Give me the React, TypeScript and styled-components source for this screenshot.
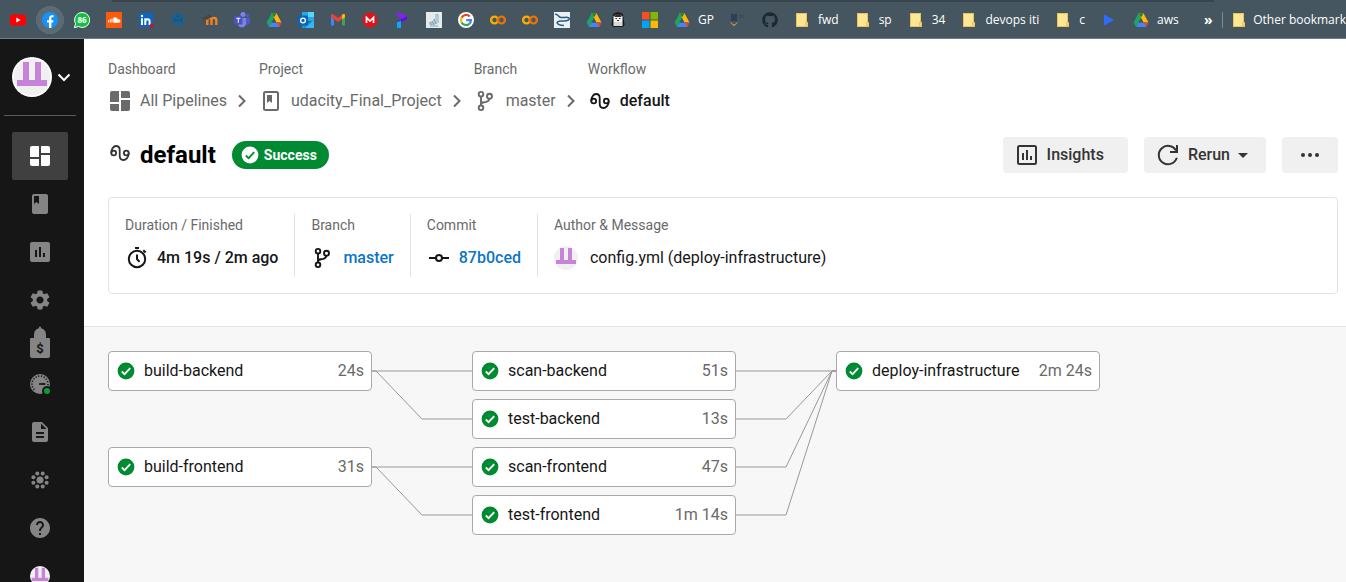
import React from "react";
import styled, { createGlobalStyle } from "styled-components";
import { MdSettings, MdHelp, MdDescription } from "react-icons/md";
import { FaGithub } from "react-icons/fa";

const GlobalStyle = createGlobalStyle`
  * { box-sizing: border-box; }
  html, body, #root { height: 100%; }
  body {
    margin: 0;
    font-family: Roboto, "Liberation Sans", sans-serif;
    font-size: 16px;
    line-height: 24px;
    color: #161616;
    background: #fff;
  }
  a { color: inherit; text-decoration: none; }
  button { font: inherit; color: inherit; border: 0; background: none; padding: 0; cursor: pointer; }
  svg { display: block; flex: none; }
`;

const green = "#008b33";

/* ---------- page frame ---------- */

const Page = styled.div`
  display: flex;
  flex-direction: column;
  height: 100vh;
  overflow: hidden;
`;

const Body = styled.div`
  display: flex;
  flex: 1;
  min-height: 0;
`;

/* ---------- bookmarks bar ---------- */

const Bar = styled.nav`
  flex: none;
  display: flex;
  align-items: center;
  height: 39px;
  padding: 4px 0 2px 2px;
  background: linear-gradient(#37444b, #37444b) 112px 0 / calc(100% - 244px) 2px no-repeat, #455660;
  border-bottom: 1px solid #6f7f88;
  font-family: "Open Sans", "Noto Sans", sans-serif;
  font-size: 12px;
  line-height: 16px;
  color: #fff;
`;

const Bookmark = styled.a<{ $active?: boolean; $last?: boolean }>`
  flex: none;
  display: flex;
  align-items: center;
  gap: ${(p) => (p.$last ? 6 : 8)}px;
  height: 28px;
  padding: ${(p) => (p.$last ? "0 0 0 8px" : "0 8px")};
  white-space: nowrap;
  ${(p) => p.$active && "margin: 0 -6px; padding: 0 14px; background: radial-gradient(circle, #5b6b74 14px, transparent 14px);"}
`;

const More = styled.button`
  flex: none;
  width: 16px;
  margin-left: auto;
  margin-right: 6px;
  font-size: 14px;
  font-weight: 700;
`;

const BarRight = styled.div`
  flex: none;
  display: flex;
  align-items: center;
`;

const BarRule = styled.span`
  flex: none;
  width: 1px;
  height: 16px;
  background: #7d8b93;
`;

const Fav = ({ children }: { children: React.ReactNode }) => (
  <svg width="16" height="16" viewBox="0 0 16 16" aria-hidden="true">
    {children}
  </svg>
);

const Drive = () => (
  <Fav>
    <path d="M5.5 1.2h5l-5 9.6L3 15 .6 10.600z" fill="#1ea362" />
    <path d="M5.500 1.200h5l5 9.300h-5z" fill="#ffba00" />
    <path d="M5.500 1.200h5L8 5.600z" fill="#188038" />
    <path d="M5.500 10.500h10L13 15H3z" fill="#4285f4" />
    <path d="M10.800 10.500h4.700L13 15z" fill="#ea4335" />
    <path d="M8 6.200l2.300 4.300H5.700z" fill="#455660" />
  </Fav>
);

const Folder = () => (
  <Fav>
    <path d="M2 1h11v9h1v5H2z" fill="#e8c55c" />
    <path d="M3 2h9v8h-1v4H3z" fill="#ffe694" />
    <path d="M12 11h1v3h-1z" fill="#f6d97a" />
  </Fav>
);

const Colab = () => (
  <Fav>
    <circle cx="4.500" cy="8" r="3.400" fill="none" stroke="#f9ab00" strokeWidth="2.400" />
    <circle cx="11.500" cy="8" r="3.400" fill="none" stroke="#e8710a" strokeWidth="2.400" />
  </Fav>
);

const icons = {
  youtube: (
    <Fav>
      <rect y="2.500" width="16" height="11" rx="2.500" fill="#f00" />
      <path d="M6.300 5.500v5l4.300-2.500z" fill="#fff" />
    </Fav>
  ),
  facebook: (
    <Fav>
      <circle cx="8" cy="8" r="8" fill="#1491fb" />
      <path d="M7 16v-5.400H5V8.300h2V6.500C7 4.400 8.200 3.200 10 3.200l1.600.1v2h-1c-1 0-1.200.5-1.200 1.200v1.800h2.100l-.4 2.300H9.400V16z" fill="#fff" />
    </Fav>
  ),
  whatsapp: (
    <Fav>
      <path d="M8 .5a7.500 7.500 0 1 1-3.500 14L.3 15.700l1.300-4A7.500 7.500 0 0 1 8 .5z" fill="#12c23f" stroke="#fff" />
      <text x="8" y="11" textAnchor="middle" fontSize="8" fontWeight="700" fill="#fff">86</text>
    </Fav>
  ),
  soundcloud: (
    <Fav>
      <rect width="16" height="16" fill="#ff5a0a" />
      <path d="M2.500 8v2.500M4.300 7v3.500M6 6.500v4" stroke="#fff" />
      <path d="M7.300 10.700V5.800a3.200 3.200 0 0 1 4.600 1.700 1.700 1.700 0 1 1 .6 3.200z" fill="#fff" />
    </Fav>
  ),
  linkedin: (
    <Fav>
      <rect x="1" y="1" width="14" height="14" rx="1" fill="#0a66c2" />
      <path d="M4 6.300V13M7.300 13V6.300M7.300 9.500c0-3 4.300-3 4.300 0V13" fill="none" stroke="#fff" strokeWidth="2" />
      <circle cx="4" cy="4" r="1.200" fill="#fff" />
      <circle cx="13.500" cy="13.800" r="2" fill="#d11124" />
    </Fav>
  ),
  seal: (
    <Fav>
      <circle cx="8" cy="7.500" r="6.500" fill="#1b618e" />
      <path d="M4.500 10V6.500L8 9l3.500-2.500V10M8 3v3" fill="none" stroke="#124f78" strokeWidth="1" />
    </Fav>
  ),
  moodle: (
    <Fav>
      <path d="M5.300 13V8c0-2.800 4.200-2.800 4.200 0v5M9.500 8c0-2.800 4.800-2.800 4.800 0v5" fill="none" stroke="#f48120" strokeWidth="2.400" />
      <path d="M.5 6l6-3 3.500 1.500L5 7.500zM1.300 6v4" fill="#4e453e" stroke="#4e453e" strokeWidth=".6" />
    </Fav>
  ),
  teams: (
    <Fav>
      <circle cx="9" cy="2.600" r="2.500" fill="#7b83eb" />
      <circle cx="13.600" cy="3.800" r="1.700" fill="#5059c9" />
      <path d="M11 6h5v4.500a2.700 2.700 0 0 1-5 1.300z" fill="#5059c9" />
      <path d="M4 6h8v5.500A4.200 4.200 0 0 1 4 13z" fill="#7b83eb" />
      <rect y="4" width="8.500" height="8.500" rx="1" fill="#4b53bc" />
      <path d="M2.300 6.300h4M4.300 6.300v4.400" stroke="#fff" />
    </Fav>
  ),
  outlook: (
    <Fav>
      <path d="M4 0h12v9H4z" fill="#28a8ea" />
      <path d="M10 0h6v5h-6z" fill="#50d9ff" />
      <path d="M4 8l6 3 6-3v8H4z" fill="#1490df" />
      <path d="M16 8v8H7z" fill="#35b8f1" />
      <rect y="3.500" width="10" height="10" rx=".8" fill="#0a64b8" />
      <circle cx="5" cy="8.500" r="2.400" fill="none" stroke="#fff" strokeWidth="1.300" />
    </Fav>
  ),
  gmail: (
    <Fav>
      <path d="M1 4v9.500h3V7.500z" fill="#4285f4" />
      <path d="M15 4v9.500h-3V7.500z" fill="#34a853" />
      <path d="M1 3.500c0-1.500 1.500-1.800 2.500-1L8 6l4.500-3.500c1-.8 2.500-.5 2.500 1V5L8 10 1 5z" fill="#ea4335" />
      <path d="M12 3l.5-.5c1-.8 2.500-.5 2.500 1V5.300l-3 2.200z" fill="#fbbc04" />
    </Fav>
  ),
  mega: (
    <Fav>
      <circle cx="8" cy="8" r="7.500" fill="#e31216" />
      <path d="M4.500 11V5.500L8 9l3.500-3.500V11" fill="none" stroke="#fff" strokeWidth="1.700" />
    </Fav>
  ),
  ribbon: (
    <Fav>
      <path d="M3 0l10 4-1 4-9-4z" fill="#8a1cff" />
      <path d="M13 4v3l-9 5V9z" fill="#5b10e8" />
      <path d="M3 10.500l4-2V16H3z" fill="#12a5ff" />
    </Fav>
  ),
  sketch: (
    <Fav>
      <rect width="16" height="16" fill="#e6eaea" />
      <path d="M4 13v-3l2 3V9l2 4V7l2 5V2M11 2l1 1v8M4 14h8" fill="none" stroke="#5f9db3" strokeWidth=".8" />
    </Fav>
  ),
  google: (
    <Fav>
      <circle cx="8" cy="8" r="8" fill="#fff" />
      <g fill="none" strokeWidth="2.200">
        <path d="M11.700 4.500A5 5 0 0 0 3.600 5.700" stroke="#ea4335" />
        <path d="M3.600 5.700a5 5 0 0 0 0 4.700" stroke="#fbbc05" />
        <path d="M3.600 10.400a5 5 0 0 0 7.700 1.400" stroke="#34a853" />
        <path d="M11.300 11.800A5 5 0 0 0 13 8.200H8.200" stroke="#4285f4" />
      </g>
    </Fav>
  ),
  snake: (
    <Fav>
      <rect width="16" height="16" fill="#e9eff3" />
      <path d="M1 2.500c3-1 3 2.500 6 3 3 .3 6-1 8 .5 1 2-2 3-5 3s-5-.5-6.500 1 2 3.500 6.500 3.500" fill="none" stroke="#285c86" strokeWidth="1.500" />
    </Fav>
  ),
  penguin: (
    <Fav>
      <path d="M3 2.500c2-3 8-3 10 0l1.500 10-1.500 2.500H3l-1.500-2.500z" fill="#15191b" />
      <path d="M3.500 4.500l2-2h5l2 2v9.500h-9z" fill="#f4f4f4" />
      <path d="M4.500 3l2-1h3l2 1v2h-7z" fill="#3b2d2a" />
      <path d="M5.500 6h1.500v1H5.500zM9 6h1.500v1H9zM7 8h2v1H7z" fill="#222" />
      <path d="M4 11h8M4 13h8" stroke="#bbb" />
    </Fav>
  ),
  microsoft: (
    <Fav>
      <path d="M0 0h7.500v7.500H0z" fill="#f25022" />
      <path d="M8.500 0H16v7.500H8.500z" fill="#7fba00" />
      <path d="M0 8.500h7.500V16H0z" fill="#00a4ef" />
      <path d="M8.500 8.500H16V16H8.500z" fill="#ffb900" />
    </Fav>
  ),
  owl: (
    <Fav>
      <path d="M1 1l1 1h4l1-1v8H1z" fill="#2c4254" />
      <path d="M1 10.500c1 3 5 3 6 0L4 14z" fill="#d9932f" stroke="#c08a3a" />
      <path d="M9 5h6M9 3.500h4" stroke="#3a4a53" />
    </Fav>
  ),
  play: (
    <Fav>
      <path d="M3 2.500v11L13 8z" fill="#2e6bff" />
    </Fav>
  ),
  github: <FaGithub size={16} color="#1e282e" />,
  drive: <Drive />,
  folder: <Folder />,
  colab: <Colab />,
};

type BookmarkData = { icon: keyof typeof icons; label?: React.ReactNode; title: string; active?: boolean };

const bookmarks: BookmarkData[] = [
  { icon: "youtube", title: "YouTube" },
  { icon: "facebook", title: "Facebook", active: true },
  { icon: "whatsapp", title: "WhatsApp" },
  { icon: "soundcloud", title: "SoundCloud" },
  { icon: "linkedin", title: "LinkedIn" },
  { icon: "seal", title: "University" },
  { icon: "moodle", title: "Moodle" },
  { icon: "teams", title: "Teams" },
  { icon: "drive", title: "Drive" },
  { icon: "outlook", title: "Outlook" },
  { icon: "gmail", title: "Gmail" },
  { icon: "mega", title: "Mega" },
  { icon: "ribbon", title: "Ribbon" },
  { icon: "sketch", title: "Sketch" },
  { icon: "google", title: "Google" },
  { icon: "colab", title: "Colab" },
  { icon: "colab", title: "Colab" },
  { icon: "snake", title: "Snake" },
  { icon: "drive", title: "Drive", label: icons.penguin },
  { icon: "microsoft", title: "Microsoft" },
  { icon: "drive", title: "GP", label: "GP" },
  { icon: "owl", title: "Owl" },
  { icon: "github", title: "GitHub" },
  { icon: "folder", title: "fwd", label: "fwd" },
  { icon: "folder", title: "sp", label: "sp" },
  { icon: "folder", title: "34", label: "34" },
  { icon: "folder", title: "devops iti", label: "devops iti" },
  { icon: "folder", title: "c", label: "c" },
  { icon: "play", title: "Play" },
  { icon: "drive", title: "aws", label: "aws" },
];

/* ---------- sidebar ---------- */

const Side = styled.aside`
  flex: none;
  display: flex;
  flex-direction: column;
  width: 84px;
  background: #161616;
  color: #858585;
  overflow: hidden;
`;

const OrgButton = styled.button`
  flex: none;
  display: flex;
  align-items: center;
  gap: 4px;
  height: 76px;
  padding: 0 12px;
  color: #fff;
`;

const SideRule = styled.hr`
  flex: none;
  width: 72px;
  height: 1px;
  margin: 0 0 16px 4px;
  border: 0;
  background: #5a5a5a;
`;

const SideLink = styled.a<{ $active?: boolean; $short?: boolean }>`
  flex: none;
  display: flex;
  align-items: center;
  justify-content: center;
  width: 56px;
  height: ${(p) => (p.$short ? 36 : 48)}px;
  margin-left: 12px;
  border-radius: 2px;
  color: ${(p) => (p.$active ? "#fff" : "inherit")};
  background: ${(p) => (p.$active ? "#404040" : "transparent")};
`;

const Identicon = ({ size, ring }: { size: number; ring?: boolean }) => (
  <svg width={size} height={size} viewBox={ring ? "0 0 40 40" : "2 2 36 36"} aria-hidden="true">
    {ring && <circle cx="20" cy="20" r="20" fill="#fff" />}
    <circle cx="20" cy="20" r={ring ? 18.5 : 18} fill="#f0f0f0" />
    <path d="M11 5h6v18h6V5h6v18h6v6H5v-6h6z" fill="#c583d9" />
  </svg>
);

type IconProps = { size?: number };

const DashboardIcon = () => (
  <svg width="24" height="24" viewBox="0 0 24 24" fill="currentColor" aria-hidden="true">
    <path d="M4 2h7v11H2V4a2 2 0 0 1 2-2zM13 2h7a2 2 0 0 1 2 2v5h-9zM2 15h9v7H4a2 2 0 0 1-2-2zM13 11h9v9a2 2 0 0 1-2 2h-7z" />
  </svg>
);

const ProjectSolidIcon = () => (
  <svg width="24" height="24" viewBox="0 0 24 24" fill="currentColor" aria-hidden="true">
    <path fillRule="evenodd" d="M6 2h12a2 2 0 0 1 2 2v16a2 2 0 0 1-2 2H6a2 2 0 0 1-2-2V4a2 2 0 0 1 2-2zm0 2v8l2.500-2 2.500 2V4z" />
  </svg>
);

const ProjectIcon = () => (
  <svg width="24" height="24" viewBox="0 0 24 24" fill="none" stroke="currentColor" strokeWidth="2" aria-hidden="true">
    <rect x="5" y="3" width="14" height="18" rx="1.500" />
    <path d="M8 6h5v8l-2.500-2L8 14z" fill="currentColor" stroke="none" />
  </svg>
);

const ChartSolidIcon = () => (
  <svg width="24" height="24" viewBox="0 0 24 24" fill="currentColor" aria-hidden="true">
    <path fillRule="evenodd" d="M4 2h16a2 2 0 0 1 2 2v16a2 2 0 0 1-2 2H4a2 2 0 0 1-2-2V4a2 2 0 0 1 2-2zm3 8v7h2v-7zm4-3v10h2V7zm4 6v4h2v-4z" />
  </svg>
);

const ChartIcon = () => (
  <svg width="24" height="24" viewBox="0 0 24 24" fill="none" stroke="currentColor" strokeWidth="2" aria-hidden="true">
    <rect x="3" y="3" width="18" height="18" rx="1.500" />
    <path d="M8 10v7M12 7v10M16 13v4" />
  </svg>
);

const PlanIcon = () => (
  <svg width="20" height="32" viewBox="0 0 20 32" fill="currentColor" aria-hidden="true">
    <path d="M9 1.500a1 1 0 0 1 2 0l.5 1c3 .8 4.500 3 4.500 6V12h3a1 1 0 0 1 1 1v17a2 2 0 0 1-2 2H2a2 2 0 0 1-2-2V13a1 1 0 0 1 1-1h3V8.500c0-3 1.500-5.200 4.500-6z" />
    <text x="10" y="27" textAnchor="middle" fontSize="13" fontWeight="700" fill="#161616">$</text>
  </svg>
);

const GaugeIcon = () => (
  <svg width="24" height="24" viewBox="0 0 24 24" aria-hidden="true">
    <circle cx="12" cy="12" r="10" fill="currentColor" />
    <path d="M6.300 17.700a8 8 0 1 1 13.500-4" fill="none" stroke="#161616" strokeWidth="1.600" strokeDasharray="1.200 1.600" />
    <path d="M11 11.300l5.500-.3a1 1 0 0 1 0 2L11 12.700z" fill="#161616" />
    <circle cx="19" cy="19" r="5" fill="#161616" />
    <circle cx="19" cy="19" r="3" fill="#0a9a3c" />
  </svg>
);

const RunnersIcon = () => (
  <svg width="24" height="24" viewBox="0 0 24 24" fill="currentColor" aria-hidden="true">
    <circle cx="12" cy="12" r="3.500" />
    {[
      [9.3, 5.4], [14.7, 5.4], [18.6, 9.300], [18.6, 14.700],
      [14.7, 18.6], [9.3, 18.6], [5.4, 14.7], [5.4, 9.3],
    ].map(([x, y]) => (
      <circle key={`${x}-${y}`} cx={x} cy={y} r="2" />
    ))}
  </svg>
);

/* ---------- line icons ---------- */

const WorkflowIcon = () => (
  <svg width="24" height="24" viewBox="0 0 24 24" fill="none" stroke="currentColor" strokeWidth="1.800" strokeLinecap="round" aria-hidden="true">
    <circle cx="5.700" cy="12" r="2.400" />
    <circle cx="18.300" cy="12" r="2.400" />
    <path d="M3.300 11.500C3.300 8 5.500 5 8 5c2.300 0 3.700 1.500 3.700 4v5.500c0 3 1.400 4.500 3.500 4.500 3 0 5.500-3 5.500-6.500" />
  </svg>
);

const BranchIcon = () => (
  <svg width="24" height="24" viewBox="0 0 24 24" fill="none" stroke="currentColor" strokeWidth="1.900" aria-hidden="true">
    <circle cx="7" cy="5.200" r="2.300" />
    <circle cx="15.500" cy="7.200" r="2.500" />
    <circle cx="7" cy="18.800" r="2.300" />
    <path d="M7 7.500v9M15.300 9.800c-.5 3-3 3.300-5.300 3.500-1.500.1-3 .7-3 2.200" />
  </svg>
);

const CommitIcon = () => (
  <svg width="24" height="24" viewBox="0 0 24 24" fill="none" stroke="currentColor" strokeWidth="2" aria-hidden="true">
    <circle cx="12" cy="12" r="3" />
    <path d="M2 12h7M15 12h7" />
  </svg>
);

const StopwatchIcon = () => (
  <svg width="24" height="24" viewBox="0 0 24 24" fill="none" stroke="currentColor" strokeWidth="2" aria-hidden="true">
    <circle cx="12" cy="13" r="8.200" />
    <path d="M10 2h4M12 8.500V13l2.500 2.800M18.300 4.300l2.300 2.200" />
  </svg>
);

const RerunIcon = () => (
  <svg width="24" height="24" viewBox="0 0 24 24" fill="none" stroke="currentColor" strokeWidth="2" aria-hidden="true">
    <path d="M20.800 14.800A9.200 9.200 0 1 1 20 7.500" />
    <path d="M21 2v7h-7" />
  </svg>
);

const ChevronRight = () => (
  <svg width="16" height="16" viewBox="0 0 16 16" fill="none" stroke="currentColor" strokeWidth="2" aria-hidden="true">
    <path d="M4 2.500L9.500 8 4 13.500" />
  </svg>
);

const Check = ({ size = 18, disc = green, tick = "#fff" }: IconProps & { disc?: string; tick?: string }) => (
  <svg width={size} height={size} viewBox="0 0 18 18" aria-hidden="true">
    <circle cx="9" cy="9" r="8.400" fill={disc} />
    <path d="M4.800 9.500l2.800 2.700 5.600-6" fill="none" stroke={tick} strokeWidth="1.800" />
  </svg>
);

/* ---------- header ---------- */

const Main = styled.main`
  flex: 1;
  min-width: 0;
  display: flex;
  flex-direction: column;
`;

const Header = styled.header`
  padding: 20px 8px 32px 24px;
  border-bottom: 1px solid #e3e3e3;
`;

const Crumbs = styled.nav`
  display: flex;
`;

const Caption = styled.div`
  font-size: 14px;
  line-height: 20px;
  color: #6a6a6a;
`;

const CrumbRow = styled.div`
  display: flex;
  align-items: center;
  gap: 8px;
  margin: 10px 8px 0 0;
  color: #6a6a6a;
`;

const CrumbLink = styled.a<{ $current?: boolean }>`
  display: flex;
  align-items: center;
  gap: 8px;
  font-weight: ${(p) => (p.$current ? 500 : 400)};
  color: ${(p) => (p.$current ? "#161616" : "inherit")};
`;

const TitleRow = styled.div`
  display: flex;
  align-items: center;
  gap: 16px;
  margin: 24px 0;
`;

const Title = styled.h1`
  display: flex;
  align-items: center;
  gap: 8px;
  margin: 0;
  font-size: 24px;
  line-height: 36px;
  font-weight: 700;
  color: #000;
  svg { margin-bottom: 4px; color: #343434; }
`;

const Badge = styled.span`
  display: flex;
  align-items: center;
  gap: 5px;
  height: 28px;
  padding: 0 12px 0 9px;
  border-radius: 14px;
  background: ${green};
  color: #fff;
  font-size: 14px;
  line-height: 20px;
  font-weight: 700;
`;

const Actions = styled.div`
  display: flex;
  gap: 16px;
  margin-left: auto;
`;

const Action = styled.button<{ $icon?: boolean; $menu?: boolean }>`
  display: flex;
  align-items: center;
  justify-content: ${(p) => (p.$icon ? "center" : "flex-start")};
  gap: 8px;
  height: 36px;
  min-width: 56px;
  padding: ${(p) => (p.$icon ? "0" : p.$menu ? "0 18px 0 12px" : "0 24px 0 12px")};
  border-radius: 4px;
  background: #f0f0f0;
  color: #343434;
  font-weight: 500;
`;

const Caret = styled.span`
  border: 5px solid transparent;
  border-top-color: #343434;
  border-bottom: 0;
`;

const Card = styled.section`
  display: flex;
  padding: 16px 0;
  border: 1px solid #e3e3e3;
  border-radius: 4px;
`;

const Fact = styled.div`
  height: 63px;
  padding: 0 16px;
  & + & { border-left: 1px solid #e3e3e3; }
  ${Caption} { line-height: 22px; }
`;

const FactValue = styled.div<{ $wide?: boolean; $medium?: boolean }>`
  display: flex;
  align-items: center;
  gap: ${(p) => (p.$wide ? 12 : 8)}px;
  margin-top: 10px;
  font-weight: ${(p) => (p.$medium ? 500 : 400)};
  white-space: nowrap;
  a { color: #0d74c8; }
`;

/* ---------- workflow graph ---------- */

const Graph = styled.section`
  flex: 1;
  padding: 24px;
  background: #f7f7f7;
`;

const Grid = styled.div`
  display: grid;
  grid-template-columns: 264px 100px 264px 100px 264px;
  grid-template-rows: repeat(4, 40px);
  row-gap: 8px;
`;

const Job = styled.a<{ $col: number; $row: number }>`
  grid-column: ${(p) => p.$col};
  grid-row: ${(p) => p.$row};
  display: flex;
  align-items: center;
  gap: 9px;
  padding: 0 7px 0 8px;
  border: 1px solid #aaa;
  border-radius: 4px;
  background: #fff;
  white-space: nowrap;
`;

const JobTime = styled.span`
  margin-left: auto;
  color: #6a6a6a;
`;

const Wires = styled.svg<{ $col: number }>`
  grid-column: ${(p) => p.$col};
  grid-row: 1 / span 4;
  width: 100px;
  height: 184px;
  fill: none;
  stroke: #999;
`;

const jobs = [
  { name: "build-backend", time: "24s", col: 1, row: 1 },
  { name: "build-frontend", time: "31s", col: 1, row: 3 },
  { name: "scan-backend", time: "51s", col: 3, row: 1 },
  { name: "test-backend", time: "13s", col: 3, row: 2 },
  { name: "scan-frontend", time: "47s", col: 3, row: 3 },
  { name: "test-frontend", time: "1m 14s", col: 3, row: 4 },
  { name: "deploy-infrastructure", time: "2m 24s", col: 5, row: 1 },
];

const crumbs = [
  { caption: "Dashboard", icon: <DashboardIcon />, label: "All Pipelines" },
  { caption: "Project", icon: <ProjectIcon />, label: "udacity_Final_Project" },
  { caption: "Branch", icon: <BranchIcon />, label: "master" },
  { caption: "Workflow", icon: <WorkflowIcon />, label: "default" },
];

export default function App() {
  return (
    <>
      <GlobalStyle />
      <Page>
        <Bar aria-label="Bookmarks">
          {bookmarks.map((b, i) => (
            <Bookmark key={i} href="#" aria-label={b.title} $active={b.active}>
              {icons[b.icon]}
              {b.label}
            </Bookmark>
          ))}
          <More aria-label="More bookmarks">»</More>
          <BarRight>
            <BarRule />
            <Bookmark href="#" $last>
              <Folder />
              Other bookmark
            </Bookmark>
          </BarRight>
        </Bar>
        <Body>
          <Side>
            <OrgButton aria-label="Switch organization">
              <Identicon size={40} ring />
              <svg width="16" height="16" viewBox="0 0 16 16" fill="none" stroke="currentColor" strokeWidth="2" aria-hidden="true">
                <path d="M2.500 5.500L8 11l5.500-5.500" />
              </svg>
            </OrgButton>
            <SideRule />
            <SideLink href="#" aria-label="Dashboard" $active><DashboardIcon /></SideLink>
            <SideLink href="#" aria-label="Projects"><ProjectSolidIcon /></SideLink>
            <SideLink href="#" aria-label="Insights"><ChartSolidIcon /></SideLink>
            <SideLink href="#" aria-label="Settings"><MdSettings size={24} /></SideLink>
            <SideLink href="#" aria-label="Plan" $short><PlanIcon /></SideLink>
            <SideLink href="#" aria-label="Status"><GaugeIcon /></SideLink>
            <SideLink href="#" aria-label="Docs"><MdDescription size={24} /></SideLink>
            <SideLink href="#" aria-label="Runners"><RunnersIcon /></SideLink>
            <SideLink href="#" aria-label="Help"><MdHelp size={24} /></SideLink>
            <SideLink href="#" aria-label="Account"><Identicon size={20} /></SideLink>
          </Side>
          <Main>
            <Header>
              <Crumbs aria-label="Breadcrumb">
                {crumbs.map((c, i) => {
                  const last = i === crumbs.length - 1;
                  return (
                    <div key={c.caption}>
                      <Caption>{c.caption}</Caption>
                      <CrumbRow>
                        <CrumbLink href="#" $current={last}>
                          {c.icon}
                          {c.label}
                        </CrumbLink>
                        {!last && <ChevronRight />}
                      </CrumbRow>
                    </div>
                  );
                })}
              </Crumbs>
              <TitleRow>
                <Title>
                  <WorkflowIcon />
                  default
                </Title>
                <Badge>
                  <Check disc="#fff" tick={green} />
                  Success
                </Badge>
                <Actions>
                  <Action>
                    <ChartIcon />
                    Insights
                  </Action>
                  <Action $menu>
                    <RerunIcon />
                    Rerun
                    <Caret />
                  </Action>
                  <Action $icon aria-label="More actions">
                    <svg width="24" height="24" viewBox="0 0 24 24" fill="currentColor" aria-hidden="true">
                      <circle cx="5" cy="12" r="2" />
                      <circle cx="12" cy="12" r="2" />
                      <circle cx="19" cy="12" r="2" />
                    </svg>
                  </Action>
                </Actions>
              </TitleRow>
              <Card>
                <Fact>
                  <Caption>Duration / Finished</Caption>
                  <FactValue $medium>
                    <StopwatchIcon />
                    <span>4m 19s / 2m ago</span>
                  </FactValue>
                </Fact>
                <Fact>
                  <Caption>Branch</Caption>
                  <FactValue $medium>
                    <BranchIcon />
                    <a href="#">master</a>
                  </FactValue>
                </Fact>
                <Fact>
                  <Caption>Commit</Caption>
                  <FactValue $medium>
                    <CommitIcon />
                    <a href="#">87b0ced</a>
                  </FactValue>
                </Fact>
                <Fact>
                  <Caption>Author &amp; Message</Caption>
                  <FactValue $wide>
                    <Identicon size={24} />
                    <span>config.yml (deploy-infrastructure)</span>
                  </FactValue>
                </Fact>
              </Card>
            </Header>
            <Graph>
              <Grid>
                {jobs.map((j) => (
                  <Job key={j.name} href="#" $col={j.col} $row={j.row}>
                    <Check />
                    {j.name}
                    <JobTime>{j.time}</JobTime>
                  </Job>
                ))}
                <Wires $col={2} viewBox="0 0 100 184" aria-hidden="true">
                  <path d="M0 20h100" />
                  <path d="M0 20h4L50 68h50" />
                  <path d="M0 116h100" />
                  <path d="M0 116h4L50 164h50" />
                </Wires>
                <Wires $col={4} viewBox="0 0 100 184" aria-hidden="true">
                  <path d="M0 20h100" />
                  <path d="M0 68h50L96 20h4" />
                  <path d="M0 116h50L96 20h4" />
                  <path d="M0 164h50L96 20h4" />
                </Wires>
              </Grid>
            </Graph>
          </Main>
        </Body>
      </Page>
    </>
  );
}
